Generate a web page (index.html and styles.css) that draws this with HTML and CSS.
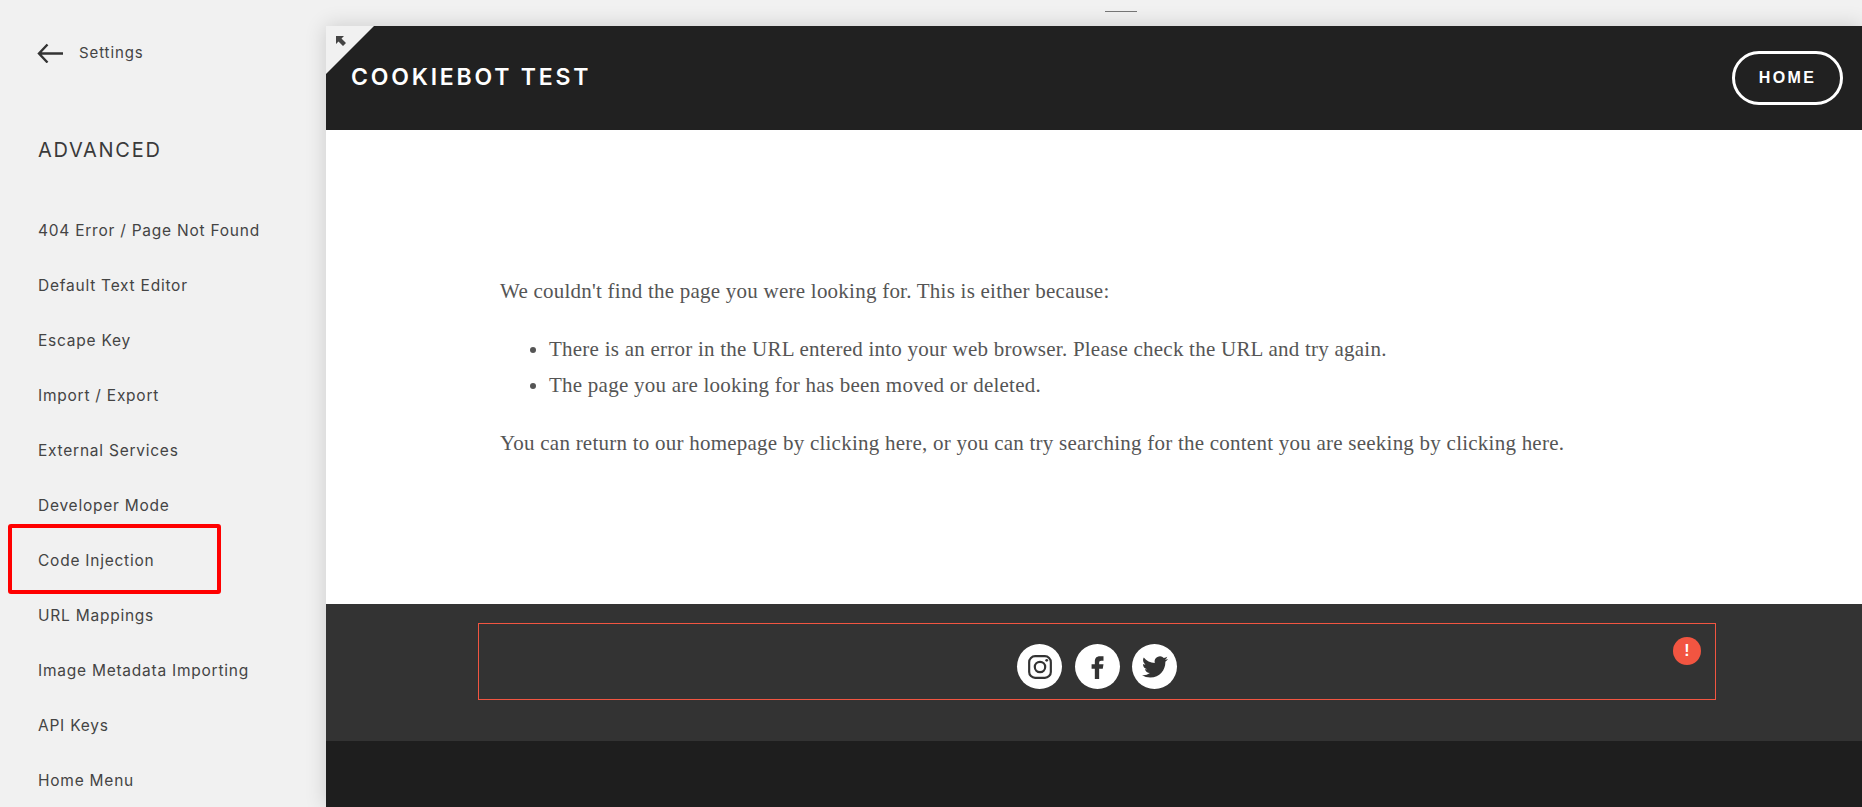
FILE: index.html

```html
<!DOCTYPE html>
<html lang="en">
<head>
  <meta charset="UTF-8" />
  <title>Advanced - Settings</title>
  <link rel="stylesheet" href="styles.css">
</head>
<body>
  <aside class="sidebar">
    <div class="back">
      <svg class="back-arrow" width="28" height="20" viewBox="0 0 28 20"><path d="M27 10.500H3M11.500 1.500 3 10.500l8.500 9" fill="none" stroke="#333" stroke-width="2.400"/></svg>
      <span>Settings</span>
    </div>
    <h2 class="side-title">ADVANCED</h2>
    <ul class="side-nav">
      <li>404 Error / Page Not Found</li>
      <li>Default Text Editor</li>
      <li>Escape Key</li>
      <li>Import / Export</li>
      <li>External Services</li>
      <li>Developer Mode</li>
      <li>Code Injection</li>
      <li>URL Mappings</li>
      <li>Image Metadata Importing</li>
      <li>API Keys</li>
      <li>Home Menu</li>
    </ul>
    <div class="highlight"></div>
  </aside>

  <main class="preview-wrap">
    <div class="topbar"><div class="handle"></div></div>
    <div class="preview">
      <div class="corner">
        <svg width="14" height="14" viewBox="0 0 14 14"><path d="M2 2h8L7.500 4.500 12 9l-3 3-4.500-4.500L2 10z" fill="#444"/></svg>
      </div>
      <header class="site-header">
        <div class="site-title">COOKIEBOT TEST</div>
        <a class="home-btn">HOME</a>
      </header>
      <section class="content">
        <p>We couldn't find the page you were looking for. This is either because:</p>
        <ul>
          <li>There is an error in the URL entered into your web browser. Please check the URL and try again.</li>
          <li>The page you are looking for has been moved or deleted.</li>
        </ul>
        <p>You can return to our homepage by clicking here, or you can try searching for the content you are seeking by clicking here.</p>
      </section>
      <footer class="site-footer">
        <div class="social-box">
          <a class="social">
            <svg width="26" height="26" viewBox="0 0 24 24" fill="none" stroke="#333" stroke-width="2"><rect x="2" y="2" width="20" height="20" rx="5.500"/><circle cx="12" cy="12" r="4.800"/><circle cx="18.200" cy="5.800" r="1.300" fill="#333" stroke="none"/></svg>
          </a>
          <a class="social">
            <svg width="26" height="26" viewBox="0 0 24 24"><path d="M14 8.200c0-1.400.5-2 1.900-2H18V2h-3.200C11.300 2 10 4 10 7v2.500H7v4h3V23h4v-9.500h3.300l.7-4h-4z" fill="#333"/></svg>
          </a>
          <a class="social">
            <svg width="26" height="26" viewBox="0 0 24 24"><path d="M23.953 4.570a10 10 0 01-2.825.775 4.958 4.958 0 002.163-2.723c-.951.555-2.005.959-3.127 1.184a4.920 4.920 0 00-8.384 4.482C7.690 8.095 4.067 6.130 1.640 3.162a4.822 4.822 0 00-.666 2.475c0 1.710.870 3.213 2.188 4.096a4.904 4.904 0 01-2.228-.616v.060a4.923 4.923 0 003.946 4.827 4.996 4.996 0 01-2.212.085 4.936 4.936 0 004.604 3.417 9.867 9.867 0 01-6.102 2.105c-.390 0-.779-.023-1.170-.067a13.995 13.995 0 007.557 2.209c9.053 0 13.998-7.496 13.998-13.985 0-.210 0-.420-.015-.630A9.935 9.935 0 0024 4.590z" fill="#333"/></svg>
          </a>
          <span class="alert">!</span>
        </div>
      </footer>
      <div class="page-bottom"></div>
    </div>
  </main>
</body>
</html>
```

FILE: styles.css

```css
* {
  margin: 0;
  padding: 0;
  box-sizing: border-box;
}
body {
  display: flex;
  height: 807px;
  overflow: hidden;
  background: #f1f1f1;
  font-family: 'Inter', sans-serif;
}
.sidebar {
  position: relative;
  width: 326px;
  flex-shrink: 0;
  padding: 43px 0 0 38px;
  color: #444;
}
.back {
  display: flex;
  align-items: center;
  gap: 15px;
  height: 20px;
  font-size: 15px;
  letter-spacing: 0.9px;
}
.back span {
  margin-top: -2px;
}
.back-arrow {
  flex-shrink: 0;
  margin-left: -2px;
}
.side-title {
  margin-top: 64px;
  font-size: 20px;
  line-height: 46px;
  font-weight: 400;
  letter-spacing: 1.7px;
  color: #3a3a3a;
}
.side-nav {
  list-style: none;
  margin-top: 30px;
}
.side-nav li {
  height: 55px;
  line-height: 55px;
  font-size: 15.5px;
  letter-spacing: 0.76px;
  white-space: nowrap;
}
.highlight {
  position: absolute;
  left: 8px;
  top: 524px;
  width: 213px;
  height: 70px;
  border: 4px solid #f00;
  border-radius: 3px;
}
.preview-wrap {
  flex: 1;
  min-width: 0;
}
.topbar {
  height: 26px;
  padding: 11px 0 0 779px;
}
.handle {
  width: 32px;
  height: 1px;
  background: #777;
}
.preview {
  position: relative;
  box-shadow: 0 0 20px rgba(0, 0, 0, 0.16);
}
.corner {
  position: absolute;
  top: 0;
  left: 0;
  width: 48px;
  height: 48px;
  padding: 8px;
  background: #f1f1f1;
  clip-path: polygon(0 0, 100% 0, 0 100%);
}
.corner svg {
  display: block;
}
.site-header {
  display: flex;
  align-items: center;
  justify-content: space-between;
  height: 104px;
  padding: 0 19px 0 25px;
  background: #212121;
  color: #fff;
}
.site-title {
  padding-bottom: 2px;
  font-size: 23px;
  font-weight: 600;
  letter-spacing: 2.800px;
}
.home-btn {
  display: flex;
  align-items: center;
  justify-content: center;
  width: 111px;
  height: 54px;
  border: 3px solid #fff;
  border-radius: 27px;
  font-size: 16px;
  font-weight: 700;
  letter-spacing: 2.400px;
  font-family: 'Liberation Sans', sans-serif;
}
.content {
  height: 474px;
  padding: 143px 0 0 174px;
  background: #fff;
  color: #555;
  font-family: 'Liberation Serif', serif;
  font-size: 21px;
  letter-spacing: 0.24px;
  line-height: 36px;
}
.content ul {
  margin: 22px 0;
  padding-left: 49px;
}
.site-footer {
  height: 137px;
  padding: 19px 146px 0 152px;
  background: #333;
}
.social-box {
  position: relative;
  display: flex;
  justify-content: center;
  gap: 12.500px;
  height: 77px;
  padding: 20px 0 0 0;
  border: 1px solid #f25541;
}
.social {
  display: flex;
  align-items: center;
  justify-content: center;
  width: 45px;
  height: 45px;
  border-radius: 50%;
  background: #fff;
}
.alert {
  position: absolute;
  top: 13px;
  right: 14px;
  width: 28px;
  height: 28px;
  border-radius: 50%;
  background: #f25541;
  color: #fff;
  font-family: 'Liberation Sans', sans-serif;
  font-size: 16px;
  font-weight: 700;
  line-height: 28px;
  text-align: center;
}
.page-bottom {
  height: 66px;
  background: #1e1e1e;
}
```
